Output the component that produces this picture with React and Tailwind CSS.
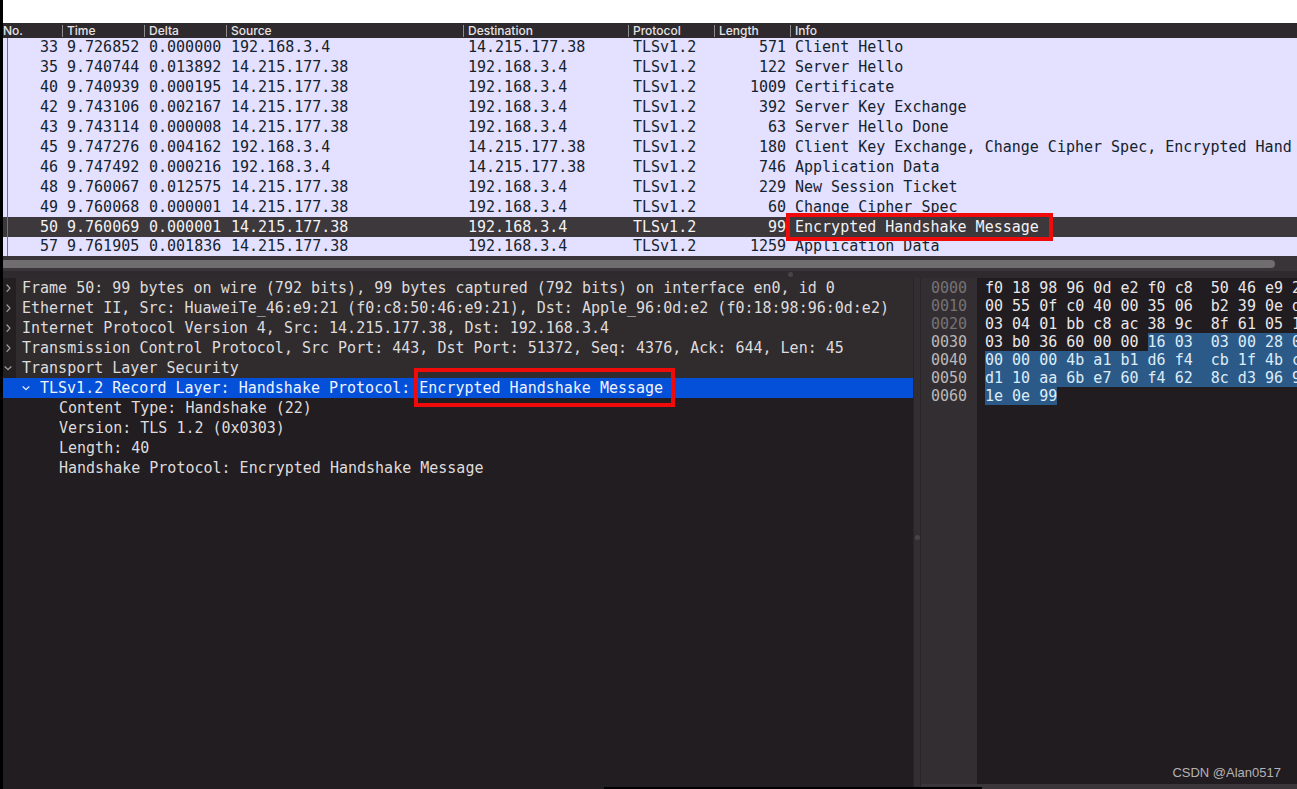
import React from "react";
import clsx from "clsx";

const A = "192.168.3.4";
const B = "14.215.177.38";

const columns = [
  { label: "No.", width: "w-[59px]" },
  { label: "Time", width: "w-[82px]" },
  { label: "Delta", width: "w-[82px]" },
  { label: "Source", width: "w-[237px]" },
  { label: "Destination", width: "w-[165px]" },
  { label: "Protocol", width: "w-[86px]" },
  { label: "Length", width: "w-[76px]" },
  { label: "Info", width: "" },
];

const packets = [
  { no: 33, time: "9.726852", delta: "0.000000", src: A, dst: B, length: 571, info: "Client Hello" },
  { no: 35, time: "9.740744", delta: "0.013892", src: B, dst: A, length: 122, info: "Server Hello" },
  { no: 40, time: "9.740939", delta: "0.000195", src: B, dst: A, length: 1009, info: "Certificate" },
  { no: 42, time: "9.743106", delta: "0.002167", src: B, dst: A, length: 392, info: "Server Key Exchange" },
  { no: 43, time: "9.743114", delta: "0.000008", src: B, dst: A, length: 63, info: "Server Hello Done" },
  { no: 45, time: "9.747276", delta: "0.004162", src: A, dst: B, length: 180, info: "Client Key Exchange, Change Cipher Spec, Encrypted Hand" },
  { no: 46, time: "9.747492", delta: "0.000216", src: A, dst: B, length: 746, info: "Application Data" },
  { no: 48, time: "9.760067", delta: "0.012575", src: B, dst: A, length: 229, info: "New Session Ticket" },
  { no: 49, time: "9.760068", delta: "0.000001", src: B, dst: A, length: 60, info: "Change Cipher Spec" },
  { no: 50, time: "9.760069", delta: "0.000001", src: B, dst: A, length: 99, info: "Encrypted Handshake Message", selected: true },
  { no: 57, time: "9.761905", delta: "0.001836", src: B, dst: A, length: 1259, info: "Application Data" },
];

const details = [
  { text: "Frame 50: 99 bytes on wire (792 bits), 99 bytes captured (792 bits) on interface en0, id 0", depth: 0, state: "closed" },
  { text: "Ethernet II, Src: HuaweiTe_46:e9:21 (f0:c8:50:46:e9:21), Dst: Apple_96:0d:e2 (f0:18:98:96:0d:e2)", depth: 0, state: "closed" },
  { text: "Internet Protocol Version 4, Src: 14.215.177.38, Dst: 192.168.3.4", depth: 0, state: "closed" },
  { text: "Transmission Control Protocol, Src Port: 443, Dst Port: 51372, Seq: 4376, Ack: 644, Len: 45", depth: 0, state: "closed" },
  { text: "Transport Layer Security", depth: 0, state: "open" },
  { text: "TLSv1.2 Record Layer: Handshake Protocol: ", marked: "Encrypted Handshake Message", depth: 1, state: "open", selected: true },
  { text: "Content Type: Handshake (22)", depth: 2 },
  { text: "Version: TLS 1.2 (0x0303)", depth: 2 },
  { text: "Length: 40", depth: 2 },
  { text: "Handshake Protocol: Encrypted Handshake Message", depth: 2 },
];

const bytes = [
  { offset: "0000", plain: "f0 18 98 96 0d e2 f0 c8  50 46 e9 2", dim: true },
  { offset: "0010", plain: "00 55 0f c0 40 00 35 06  b2 39 0e d", dim: true },
  { offset: "0020", plain: "03 04 01 bb c8 ac 38 9c  8f 61 05 1", dim: true },
  { offset: "0030", plain: "03 b0 36 60 00 00 ", marked: "16 03  03 00 28 0" },
  { offset: "0040", marked: "00 00 00 4b a1 b1 d6 f4  cb 1f 4b c" },
  { offset: "0050", marked: "d1 10 aa 6b e7 60 f4 62  8c d3 96 9" },
  { offset: "0060", marked: "1e 0e 99" },
];

const indents = ["pl-0", "pl-[18px]", "pl-9"];

const Chevron = ({ open }) => (
  <svg
    viewBox="0 0 10 10"
    className="w-[10px] h-[10px]"
    fill="none"
    stroke="currentColor"
    strokeWidth="1.2"
    strokeLinecap="round"
    strokeLinejoin="round"
  >
    {open ? <path d="M2 3.8 L5 6.6 L8 3.8" /> : <path d="M4 2 L7 5.2 L4 8.4" />}
  </svg>
);

const PacketList = () => (
  <div className="w-full overflow-hidden bg-[#e4e0ff]">
    <table className="w-full table-fixed border-collapse whitespace-nowrap text-left">
      <thead className="bg-[#2e292c] text-[#e6e3e5] font-['Inter','Liberation_Sans',sans-serif] text-xs">
        <tr>
          {columns.map((col, i) => (
            <th key={col.label} className={clsx("p-0 h-[15px] font-medium", col.width)}>
              <div
                className={clsx(
                  "h-3 leading-3",
                  i > 0 && "border-l border-[#8f8b8e] pl-1"
                )}
              >
                {col.label}
              </div>
            </th>
          ))}
        </tr>
      </thead>
      <tbody className="text-[15px] text-[#14232e]">
        {packets.map((p, i) => {
          const line = i === 0 || i === packets.length - 1 ? "h-[19px] leading-[19px]" : "h-5 leading-5";
          return (
            <tr key={p.no} className={clsx(line, p.selected && "bg-[#3c383b] text-[#f4f2f4]")}>
              <td className="p-0">
                <div className="ml-1 border-l border-[#77737c] pr-1 text-right">{p.no}</div>
              </td>
              <td className="p-0 pl-[5px]">{p.time}</td>
              <td className="p-0 pl-[5px]">{p.delta}</td>
              <td className="p-0 pl-[5px]">{p.src}</td>
              <td className="p-0 pl-[5px]">{p.dst}</td>
              <td className="p-0 pl-[5px]">TLSv1.2</td>
              <td className="p-0 pr-1 text-right">{p.length}</td>
              <td className="p-0 pl-[5px]">
                {p.selected ? (
                  <span className="relative inline-block">
                    {p.info}
                    <span className="absolute -top-1 -bottom-1 -left-[9px] -right-[14px] border-4 border-[#f00a0a]" />
                  </span>
                ) : (
                  p.info
                )}
              </td>
            </tr>
          );
        })}
      </tbody>
    </table>
  </div>
);

const DetailTree = () => (
  <div className="flex-1 min-w-0 bg-[#221d20] text-[15px] leading-5 text-[#dedbdd] whitespace-pre">
    <ul>
      {details.map((row) => (
        <li
          key={row.text}
          className={clsx(
            "h-5",
            row.selected && "bg-[#0450d8] text-[#eef3ff]",
            row.depth === 0 && "bg-[linear-gradient(to_right,#242022_13px,#302c2e_13px)]"
          )}
        >
          <div className={clsx("flex", indents[row.depth])}>
            {row.state ? (
              <button type="button" aria-expanded={row.state === "open"} className="flex items-center text-left">
                <span className={clsx("w-[19px] shrink-0", !row.selected && "text-[#aaa6a9]")}>
                  <Chevron open={row.state === "open"} />
                </span>
                <span>{row.text}</span>
                {row.marked && (
                  <span className="relative">
                    {row.marked}
                    <span className="absolute -top-[10px] -bottom-[9px] -left-[5px] -right-3 border-4 border-[#f00a0a]" />
                  </span>
                )}
              </button>
            ) : (
              <span className="pl-5">{row.text}</span>
            )}
          </div>
        </li>
      ))}
    </ul>
  </div>
);

const HexView = () => (
  <div className="w-[376px] shrink-0 flex overflow-hidden border-b-[5px] border-[#3b3639] bg-[#211c1f] text-[15px] leading-[18px] whitespace-pre">
    <div className="w-14 shrink-0 bg-[#332e31] pt-px pl-[10px]">
      {bytes.map((row) => (
        <div key={row.offset} className={row.dim ? "text-[#777376]" : "text-[#bbb8ba]"}>
          {row.offset}
        </div>
      ))}
    </div>
    <div className="flex-1 pt-px pl-2 text-[#eae7e9]">
      {bytes.map((row) => (
        <div key={row.offset} className="flex h-[18px]">
          {row.plain && <span>{row.plain}</span>}
          {row.marked && <span className="bg-[#2c5a88] text-[#dcecf8]">{row.marked}</span>}
        </div>
      ))}
    </div>
  </div>
);

export default function App() {
  return (
    <div className="relative h-screen w-full flex flex-col overflow-hidden border-l-[3px] border-black bg-[#221d20] font-['DejaVu_Sans_Mono',monospace]">
      <div className="h-[23px] shrink-0 bg-white" />
      <PacketList />

      {/* Horizontal scrollbar */}
      <div className="shrink-0 bg-[#383437] pt-1 pb-[3px] pr-[22px]">
        <div className="h-2 rounded-r-full bg-[#706d6f]" />
      </div>

      {/* Splitter between the list and the lower panes */}
      <div className="h-[7px] shrink-0 flex items-center bg-[#2f2a2d] pl-[785px]">
        <div className="size-[5px] rounded-full bg-[#484447]" />
      </div>

      <div className="flex flex-1 min-h-0">
        <DetailTree />
        <div className="w-2 shrink-0 flex items-center justify-center border-x border-[#2a2528] bg-[#332e31] pt-2">
          <div className="size-[5px] rounded-full bg-[#484447]" />
        </div>
        <HexView />
      </div>

      <div className="absolute bottom-0 left-[601px] h-[2px] w-[378px] bg-black" />
      <div className="absolute bottom-[6px] right-4 font-['Liberation_Sans',sans-serif] text-[13px] leading-5 text-[#b5b2b4]">
        CSDN @Alan0517
      </div>
    </div>
  );
}
